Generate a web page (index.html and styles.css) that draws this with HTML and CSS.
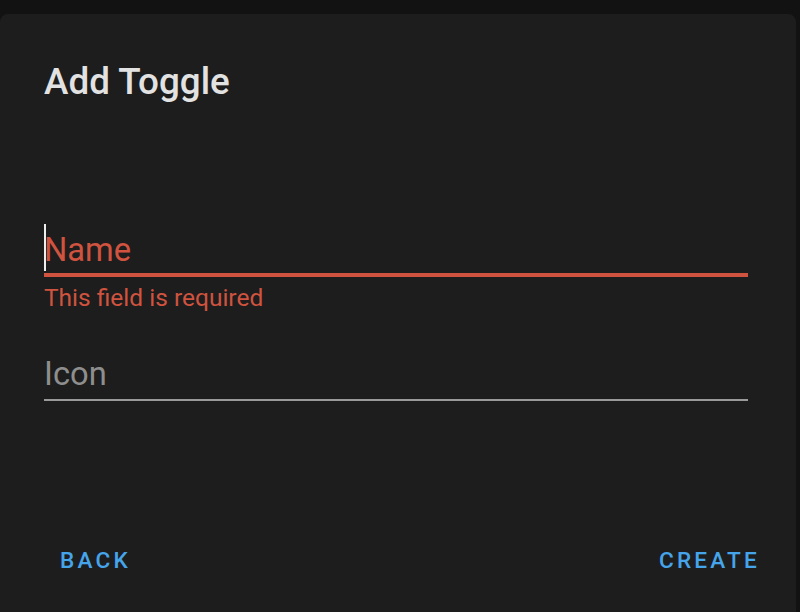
FILE: index.html
```html
<!DOCTYPE html>
<html lang="en">
<head>
  <meta charset="UTF-8" />
  <title>Add Toggle</title>
  <link rel="stylesheet" href="styles.css">
</head>
<body>
  <div class="dialog">
    <h2 class="dialog-title">Add Toggle</h2>

    <div class="dialog-content">
      <div class="field field-error">
        <span class="field-label caret">Name</span>
      </div>
      <div class="helper-text">This field is required</div>

      <div class="field field-idle">
        <span class="field-label">Icon</span>
      </div>
    </div>

    <div class="dialog-actions">
      <button class="text-btn">Back</button>
      <button class="text-btn">Create</button>
    </div>
  </div>
</body>
</html>
```

FILE: styles.css
```css
html, body {
  height: 612px;
  overflow: hidden;
}

body {
  margin: 0;
  padding-top: 14px;
  background: #121212;
  font-family: 'Roboto', 'Liberation Sans', sans-serif;
  box-sizing: border-box;
}

.dialog {
  width: 796px;
  height: 598px;
  box-sizing: border-box;
  background: #1d1d1d;
  border-radius: 8px 8px 0 0;
  padding: 44px 48px 0 44px;
  display: flex;
  flex-direction: column;
}

.dialog-title {
  margin: 0;
  font-size: 36.8px;
  line-height: 48px;
  font-weight: 500;
  color: #e2e2e2;
}

.dialog-content {
  padding-top: 122px;
}

.field {
  position: relative;
  font-size: 32.7px;
  line-height: 40px;
  padding-top: 2px;
}

.field-error {
  color: #d0533f;
  padding-bottom: 3px;
  border-bottom: 4px solid #d0533f;
}

.field-idle {
  color: #8e8e8e;
  margin-top: 40px;
  padding-bottom: 5px;
  border-bottom: 2px solid #9a9a9a;
}

.caret:before {
  content: "";
  position: absolute;
  left: 0;
  top: -4px;
  width: 2px;
  height: 47px;
  background: #eeeeee;
}

.helper-text {
  margin-top: 7px;
  font-size: 24.5px;
  line-height: 28px;
  color: #d0533f;
}

.dialog-actions {
  display: flex;
  justify-content: space-between;
  margin: 139px -28px 0 0;
}

.text-btn {
  background: none;
  border: none;
  padding: 8px 16px;
  font-family: inherit;
  font-size: 22.6px;
  line-height: 26px;
  font-weight: 500;
  letter-spacing: 3.2px;
  text-transform: uppercase;
  color: #45a4ea;
  cursor: pointer;
}
```
